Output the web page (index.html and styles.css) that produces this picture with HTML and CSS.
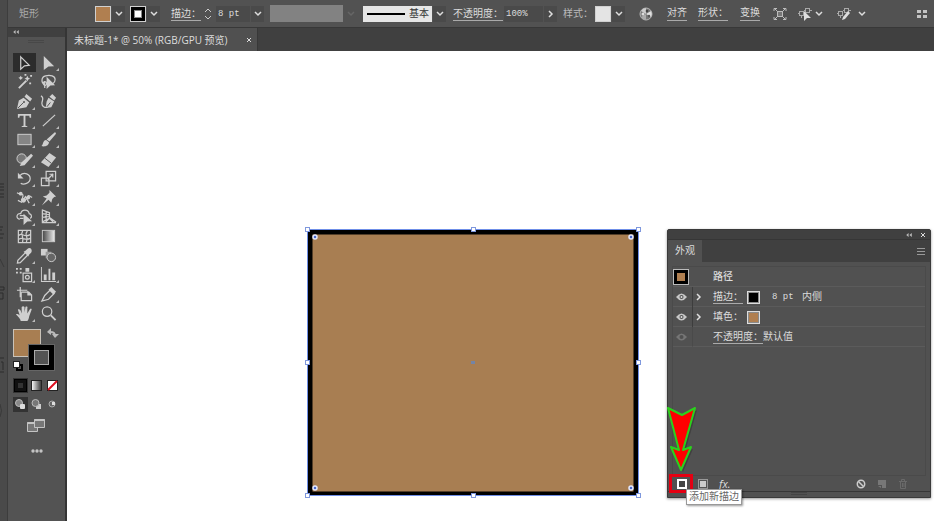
FILE: index.html
```html
<!DOCTYPE html>
<html lang="zh-CN">
<head>
    <meta charset="UTF-8">
    <meta name="viewport" content="width=device-width, initial-scale=1.0">
    <title>未标题-1</title>
    <link rel="stylesheet" href="styles.css">
</head>
<body>

<div class="app">

    <!-- Bordo sinistro -->
    <div class="edge">
        <svg width="7" height="521" viewBox="0 0 7 521" fill="none" stroke="#2c2c2c">
            <path d="M0 184h4M0 187h4M0 190h4M0 194h4M0 197h4M0 227h3M0 230h2M0 234h4M0 238h3M0 287h4v3H0M0 293h3v6H0M0 358h4M1 362h2v8M0 372h4"/>
            <path d="M0 259l4 8M0 404q3 7 0 13" stroke="#3a3a3a"/>
        </svg>
    </div>

    <div class="main">

        <!-- Barra opzioni -->
        <div class="option-bar">
            <span class="object-name">矩形</span>
            <button class="combo" aria-label="填色"><span class="swatch brown"></span><span class="arrow"><svg class="chevron" viewBox="0 0 8 6"><path d="M1 1l3 3 3-3"/></svg></span></button>
            <button class="combo" aria-label="描边颜色"><span class="swatch black"></span><span class="arrow"><svg class="chevron" viewBox="0 0 8 6"><path d="M1 1l3 3 3-3"/></svg></span></button>
            <label class="link-label" for="weight">描边：</label>
            <div class="field">
                <button class="stepper" aria-label="调整粗细"><svg width="10" height="14" viewBox="0 0 10 14"><path d="M2 5l3-3 3 3M2 9l3 3 3-3"/></svg></button>
                <input type="text" id="weight" class="weight" value="8 pt">
                <button class="arrow" aria-label="粗细列表"><svg class="chevron" viewBox="0 0 8 6"><path d="M1 1l3 3 3-3"/></svg></button>
            </div>
            <button class="combo disabled" aria-label="变量宽度配置文件" disabled><span class="profile"></span><span class="arrow"><svg class="chevron" viewBox="0 0 8 6"><path d="M1 1l3 3 3-3"/></svg></span></button>
            <div class="field">
                <div class="brush">
                    <span class="brush-line"></span>
                    <select aria-label="画笔定义"><option>基本</option></select>
                </div>
                <span class="arrow"><svg class="chevron" viewBox="0 0 8 6"><path d="M1 1l3 3 3-3"/></svg></span>
            </div>
            <label class="link-label" for="opacity">不透明度：</label>
            <div class="field">
                <input type="text" id="opacity" class="opacity" value="100%">
                <button class="arrow" aria-label="不透明度滑块"><svg class="chevron right" viewBox="0 0 8 6"><path d="M1 1l3 3 3-3"/></svg></button>
            </div>
            <span class="plain-label">样式：</span>
            <button class="combo" aria-label="图形样式"><span class="swatch light"></span><span class="arrow"><svg class="chevron" viewBox="0 0 8 6"><path d="M1 1l3 3 3-3"/></svg></span></button>
            <button class="icon-button" aria-label="重新着色图稿">
                <svg width="14" height="14" viewBox="0 0 14 14">
                    <circle cx="7" cy="7" r="6" fill="#777" stroke="#b5b5b5"/>
                    <path d="M7 7L2 4a6 6 0 0 1 5-3z" fill="#ccc"/><path d="M7 7l5-3a6 6 0 0 1 0 6z" fill="#e0e0e0"/><path d="M7 7v6a6 6 0 0 1-5-3z" fill="#aaa"/>
                    <circle cx="8" cy="4" r="1.3" fill="#444"/><circle cx="10" cy="9" r="1.2" fill="#555"/><circle cx="4" cy="7" r="1.5" fill="#ddd"/>
                </svg>
            </button>
            <button class="link-label">对齐</button>
            <button class="link-label">形状：</button>
            <button class="link-label">变换</button>
            <button class="icon-button" aria-label="隔离选中的对象">
                <svg width="14" height="14" viewBox="0 0 14 14" fill="none" stroke="#bdbdbd"><rect x="4.5" y="4.5" width="5" height="5" fill="#777"/><path d="M1 4V1.500h3M1 1l3 3M13 4V1.500h-3M13 1l-3 3M1 10v2.500h3M1 13l3-3M13 10v2.500h-3M13 13l-3-3"/></svg>
            </button>
            <button class="icon-button" aria-label="选择类似的对象">
                <svg width="14" height="14" viewBox="0 0 14 14" fill="none" stroke="#a9a9a9"><rect x="1.5" y="4.5" width="4" height="4"/><rect x="7.5" y="1.5" width="4" height="4"/><path d="M0 6.500h1M6 3.500h1M12 3.500h2M3.500 9v2"/><path d="M6 4l7 7H9l-3 3z" fill="#ddd" stroke="none"/></svg>
                <svg class="chevron" viewBox="0 0 8 6"><path d="M1 1l3 3 3-3"/></svg>
            </button>
            <button class="icon-button wide" aria-label="编辑类似的形状">
                <svg width="14" height="14" viewBox="0 0 14 14" fill="none" stroke="#a9a9a9"><rect x="1.5" y="4.5" width="4" height="4"/><rect x="7.5" y="1.5" width="4" height="4"/><path d="M0 6.500h1M6 3.500h1M12 3.500h2M3.500 9v2"/><path d="M11 4l2 2-5 6-3 1 1-3z" fill="#ddd" stroke="none"/></svg>
                <svg class="chevron" viewBox="0 0 8 6"><path d="M1 1l3 3 3-3"/></svg>
            </button>
            <button class="icon-button last" aria-label="面板菜单">
                <svg width="10" height="10" viewBox="0 0 10 10" fill="#c4c4c4"><path d="M0 1h4v3H0zM6 1h4v3H6zM0 6h4v3H0zM6 6h4v3H6z"/></svg>
            </button>
        </div>

        <div class="workspace">

            <!-- Strumenti -->
            <aside class="tools">
                <div class="tools-head"><svg width="6" height="4" viewBox="0 0 7 5" fill="#bbb"><path d="M3 0v5L0 2.500zM7 0v5L4 2.500z"/></svg></div>
                <div class="grip"></div>
                <div class="tool-grid">
                    <button class="tool active" aria-label="选择"><svg viewBox="0 0 18 18"><path class="line" d="M5 3l9 9-5 .5-4 3.500z"/></svg></button>
                    <button class="tool more" aria-label="直接选择"><svg viewBox="0 0 18 18"><path d="M4 2l11 11-6 .3L4 17z"/></svg></button>
                    <button class="tool" aria-label="魔棒"><svg viewBox="0 0 18 18"><path class="thick" d="M3 16l8-8"/><path d="M12 3l1 2 2 1-2 1-1 2-1-2-2-1 2-1zM5 3l1 1.500L7.500 5 6 6 5 7.500 4 6 2.500 5 4 4.500zM14 10h2v2h-2zM9 1h2v2H9zM15 2h2v2h-2z"/></svg></button>
                    <button class="tool" aria-label="套索"><svg viewBox="0 0 18 18"><path class="line" d="M5 12C1 11 1 4 6 3s10 0 10 4-4 5-6 5M5 9c-3 1-1 5 1 4s1-4-1-4v7"/><path d="M7 4l9 9-5 .3L7 17z"/></svg></button>
                    <button class="tool more" aria-label="钢笔"><svg viewBox="0 0 18 18"><path d="M11 1l6 5-2 3-6-5zM8 5l6 5-3 5-10 2 2-9z"/><path class="cut" d="M2 16l6-6"/><circle cx="8.5" cy="9.5" r="1" fill="#535353"/></svg></button>
                    <button class="tool" aria-label="曲率"><svg viewBox="0 0 18 18"><path d="M13 1l4 4-2 3-5-4zM9 5l6 4-3 6-6 1 1-7z"/><path class="cut" d="M7 15l4-5"/><path class="line" d="M1 3c4 2 1 5 1 8s3 5 6 4"/></svg></button>
                    <button class="tool more" aria-label="文字"><svg viewBox="0 0 18 18"><path d="M2 2h14v4h-1.500L14 4h-4v10.500l2 .5v1H6v-1l2-.5V4H4l-.5 2H2z"/></svg></button>
                    <button class="tool more" aria-label="直线段"><svg viewBox="0 0 18 18"><path class="line" d="M3 15L16 3"/></svg></button>
                    <button class="tool more" aria-label="矩形"><svg viewBox="0 0 18 18"><rect x="2" y="3.5" width="14" height="11" fill="#858585" stroke="#d0d0d0"/></svg></button>
                    <button class="tool more" aria-label="画笔"><svg viewBox="0 0 18 18"><path d="M16 1l1 2-7 8-3-2zM6.500 9.500l3 2.500c0 4-5 5-8 4 2-1 1-6 5-6.500z"/></svg></button>
                    <button class="tool more" aria-label="Shaper"><svg viewBox="0 0 18 18"><circle cx="6" cy="8" r="5" fill="#777" stroke="#d0d0d0"/><path d="M16 3l2 2-9 10-5 1 2-4z"/></svg></button>
                    <button class="tool more" aria-label="橡皮擦"><svg viewBox="0 0 18 18"><path d="M10 2l7 5-8 10-8-5z"/><path class="cut" d="M5 7.500l7 5.500"/></svg></button>
                    <button class="tool more" aria-label="旋转"><svg viewBox="0 0 18 18"><path class="line" d="M4 6c5-5 11-1 11 3 0 5-7 7-10 5" /><path d="M2 3v6h6z"/></svg></button>
                    <button class="tool more" aria-label="比例缩放"><svg viewBox="0 0 18 18"><path class="line" d="M6.500 1.500h10v10h-10zM1.500 8.500h8v8h-8zM8 10l6-6M10 4.500h3.500V8"/></svg></button>
                    <button class="tool more" aria-label="宽度"><svg viewBox="0 0 18 18"><path class="line" d="M1 4l4 2c4-2 2 4 1 5s3 3 5-1 2-4 6-1M2 12l4 2 4-6 4 7"/><circle cx="5" cy="5" r="2"/><circle cx="8" cy="12" r="2.5"/><circle cx="13" cy="9" r="2"/></svg></button>
                    <button class="tool more" aria-label="操控变形"><svg viewBox="0 0 18 18"><path d="M10 1l7 7-2 .5-2 2-1 4-3-3-7 6 5-7.500-4-2 4-1 3-3z"/></svg></button>
                    <button class="tool more" aria-label="形状生成器"><svg viewBox="0 0 18 18"><path class="line" d="M4 12c-5-1-3-7 1-6 1-5 8-5 9 0 3 1 3 4 1 5M4 8h5M4 11h4"/><path d="M8 6l9 8-5 .3L8 18z"/></svg></button>
                    <button class="tool more" aria-label="透视网格"><svg viewBox="0 0 18 18"><path class="line" d="M2.500 1.500v14H17M2 2l8 3v6l-8 4M2 6l8 1M2 10l8-1M6.500 3.500v9M10 10l7 5M6 15l4-4 4 4"/></svg></button>
                    <button class="tool" aria-label="网格"><svg viewBox="0 0 18 18"><path class="line" d="M2.500 2.500h13v13h-13zM3 8c4-4 5 3 12-1M3 12c4-3 7 2 12-1M7 3c-3 5 2 6 0 12M12 3c-4 5 2 6-1 12"/></svg></button>
                    <button class="tool" aria-label="渐变"><svg viewBox="0 0 18 18"><defs><linearGradient id="grad"><stop stop-color="#444"/><stop offset="1" stop-color="#eee"/></linearGradient></defs><rect x="2.5" y="2.500" width="13" height="12" fill="url(#grad)" stroke="#c8c8c8"/></svg></button>
                    <button class="tool more" aria-label="吸管"><svg viewBox="0 0 18 18"><path class="line" d="M10 6l-8 8-.5 3 3-.5 8-8"/><path d="M8 5l2-1 2-2c3-3 6 1 4 4l-2 2-1 2z"/></svg></button>
                    <button class="tool" aria-label="混合"><svg viewBox="0 0 18 18"><rect x="1" y="2" width="7" height="7"/><rect x="6" y="5" width="6" height="7" fill="#999"/><circle cx="12" cy="11" r="4.500" fill="#666" stroke="#ccc"/></svg></button>
                    <button class="tool more" aria-label="符号喷枪"><svg viewBox="0 0 18 18"><path class="line" d="M7.500 7.500h9v9h-9z"/><path d="M10 2h4v4h-4zM0 2h2v2H0zM4 2h2v2H4zM0 6h2v2H0zM4 6h2v2H4z"/><circle class="line" cx="12" cy="12" r="2"/></svg></button>
                    <button class="tool more" aria-label="柱形图"><svg viewBox="0 0 18 18"><path d="M1 1h1v15h15v1H1zM4 9h3v6H4zM9 3h2v12H9zM13 7h3v8h-3z"/></svg></button>
                    <button class="tool" aria-label="画板"><svg viewBox="0 0 18 18"><path class="line" d="M4.500 1v11M1 4.500h11M5.500 6.500v9h11v-6l-3-3h-8"/><path d="M12 5l5 5h-5z"/></svg></button>
                    <button class="tool more" aria-label="切片"><svg viewBox="0 0 18 18"><path class="line" d="M2 16l3-6 6-6 4 4-6 6z"/><path d="M12 1l5 5-3 3-5-5z"/></svg></button>
                    <button class="tool more" aria-label="抓手"><svg viewBox="0 0 18 18"><path d="M5 17c0-2-3-5-5-7 1-1 3 0 4 1L2 5c1-1 2 0 3 1l1 3V2c1-1 2-1 3 0v6l1-6c1-1 3 0 2 1v6l3-5c1 0 2 0 1.500 1L14 12c-.5 3-1 4-2 5z"/></svg></button>
                    <button class="tool" aria-label="缩放"><svg viewBox="0 0 18 18"><circle class="line" cx="7.5" cy="7" r="5"/><path class="thick" d="M11.500 11l5 5"/></svg></button>
                </div>

                <svg class="fill-stroke" width="48" height="44" viewBox="0 0 48 44">
                    <rect x="1.5" y="1.5" width="27" height="27" fill="#a87e52" stroke="#c9c2b8"/>
                    <rect x="16.5" y="16.5" width="26" height="26" fill="#000" stroke="#666"/>
                    <rect x="22.5" y="22.5" width="14" height="14" fill="#535353" stroke="#aaa"/>
                    <path d="M38 4c4 0 5 1 5 5" fill="none" stroke="#bbb" stroke-width="2"/>
                    <path d="M39 0v7l-4-3zM40 6h7l-4 4z" fill="#bbb"/>
                    <rect x="5" y="37" width="5" height="5" fill="none" stroke="#000" stroke-width="2"/>
                    <rect x="1.500" y="33.500" width="6" height="6" fill="#fff" stroke="#222"/>
                </svg>

                <div class="mode-row">
                    <button class="mode dark" aria-label="颜色"><svg width="13" height="13" viewBox="0 0 13 13"><rect x=".5" y=".5" width="12" height="12" fill="#111" stroke="#000"/><rect x="4" y="4" width="5" height="5" fill="#333"/></svg></button>
                    <button class="mode" aria-label="渐变填充"><svg width="13" height="13" viewBox="0 0 13 13"><defs><linearGradient id="grad2"><stop stop-color="#fff"/><stop offset="1" stop-color="#333"/></linearGradient></defs><rect x="1.5" y="1.5" width="10" height="10" fill="url(#grad2)" stroke="#222"/></svg></button>
                    <button class="mode" aria-label="无"><svg width="13" height="13" viewBox="0 0 13 13"><rect x="1.5" y="1.5" width="10" height="10" fill="#fff" stroke="#222"/><path d="M2 11l9-9" stroke="#e01020" stroke-width="2"/></svg></button>
                </div>
                <div class="mode-row">
                    <button class="mode dark" aria-label="正常绘图"><svg width="13" height="13" viewBox="0 0 13 13"><circle cx="5" cy="5" r="3.5" fill="#888" stroke="#bbb"/><rect x="6" y="6" width="5" height="5" rx="1" fill="#ddd"/></svg></button>
                    <button class="mode" aria-label="背面绘图"><svg width="13" height="13" viewBox="0 0 13 13"><rect x="6" y="6" width="5" height="5" fill="#ccc"/><circle cx="5.5" cy="5" r="3.5" fill="#777" stroke="#bbb"/></svg></button>
                    <button class="mode" aria-label="内部绘图"><svg width="13" height="13" viewBox="0 0 13 13"><circle cx="6" cy="6" r="3" fill="#666" stroke="#aaa"/><path d="M6 7V4h3v3z" fill="#ddd"/></svg></button>
                </div>
                <button class="screen-mode" aria-label="更改屏幕模式"><svg width="18" height="15" viewBox="0 0 18 15" fill="#777" stroke="#c4c4c4"><path d="M.5 4.500h10v9H.5z"/><path d="M.5 5h10" stroke-width="2"/><path d="M7.500 1.500h10v8h-10z"/><path d="M7.500 2h10" stroke-width="2"/></svg></button>
                <button class="more-tools" aria-label="编辑工具栏"><svg width="12" height="4" viewBox="0 0 12 4" fill="#c4c4c4"><circle cx="2" cy="2" r="1.7"/><circle cx="6" cy="2" r="1.7"/><circle cx="10" cy="2" r="1.7"/></svg></button>
            </aside>

            <!-- Documento -->
            <main class="document">
                <div class="tab-bar">
                    <div class="tab">
                        <span>未标题-1* @ 50% (RGB/GPU 预览)</span>
                        <button class="close" aria-label="关闭"><svg width="6" height="6" viewBox="0 0 6 6"><path d="M1 1l4 4M5 1L1 5"/></svg></button>
                    </div>
                </div>

                <div class="canvas">
                    <svg class="artwork" width="340" height="276" viewBox="0 0 340 276">
                        <rect x="5" y="6" width="330" height="266" fill="#000"/>
                        <rect x="9.5" y="10.5" width="321" height="257" fill="#a87e52"/>
                        <rect x="4.5" y="5.5" width="331" height="266" fill="none" stroke="#6f8fe8"/>
                        <g fill="#fff" stroke="#7f98dd">
                            <rect x="2.5" y="3.5" width="4" height="4"/><rect x="168.5" y="3.5" width="4" height="4"/><rect x="333.5" y="3.5" width="4" height="4"/>
                            <rect x="2.5" y="136.5" width="4" height="4"/><rect x="333.5" y="136.5" width="4" height="4"/>
                            <rect x="2.5" y="269.5" width="4" height="4"/><rect x="168.5" y="269.5" width="4" height="4"/><rect x="333.5" y="269.5" width="4" height="4"/>
                        </g>
                        <g fill="#4a68cc" stroke="#e4e9ff" stroke-width="1.5">
                            <circle cx="12" cy="13" r="2"/><circle cx="328" cy="13" r="2"/><circle cx="12" cy="264" r="2"/><circle cx="328" cy="264" r="2"/>
                        </g>
                        <rect x="168" y="137" width="4" height="3" fill="#7484a4"/>
                    </svg>

                    <!-- Pannello aspetto -->
                    <section class="panel">
                        <div class="panel-head">
                            <svg width="6" height="4" viewBox="0 0 7 5" fill="#bbb"><path d="M3 0v5L0 2.500zM7 0v5L4 2.500z"/></svg>
                            <button class="close" aria-label="关闭面板"><svg width="6" height="6" viewBox="0 0 6 6"><path d="M1 1l4 4M5 1L1 5"/></svg></button>
                        </div>
                        <div class="panel-tabs">
                            <button class="panel-tab">外观</button>
                            <button class="menu" aria-label="面板菜单"><svg width="8" height="7" viewBox="0 0 8 7" stroke="#999"><path d="M0 .5h8M0 3.500h8M0 6.500h8"/></svg></button>
                        </div>
                        <div class="list">
                            <div class="row">
                                <span class="thumb"></span>
                                <span></span>
                                <strong>路径</strong>
                            </div>
                            <div class="row ruled">
                                <button class="eye" aria-label="切换描边可视性"><svg width="11" height="8" viewBox="0 0 11 8"><path d="M0 4q5.500-7 11 0-5.500 7-11 0z"/><circle cx="5.5" cy="4" r="2"/><circle class="pupil" cx="5.5" cy="4" r="1"/></svg></button>
                                <button class="expand" aria-label="展开描边"><svg class="chevron right" viewBox="0 0 8 6"><path d="M1 1l3 3 3-3"/></svg></button>
                                <div class="attr">
                                    <button class="link-label">描边：</button>
                                    <span class="chip black"></span>
                                    <span class="mono">8 pt</span>
                                    <span>内侧</span>
                                </div>
                            </div>
                            <div class="row ruled">
                                <button class="eye" aria-label="切换填色可视性"><svg width="11" height="8" viewBox="0 0 11 8"><path d="M0 4q5.500-7 11 0-5.500 7-11 0z"/><circle cx="5.5" cy="4" r="2"/><circle class="pupil" cx="5.5" cy="4" r="1"/></svg></button>
                                <button class="expand" aria-label="展开填色"><svg class="chevron right" viewBox="0 0 8 6"><path d="M1 1l3 3 3-3"/></svg></button>
                                <div class="attr">
                                    <span class="attr-name">填色：</span>
                                    <span class="chip brown"></span>
                                </div>
                            </div>
                            <div class="row ruled">
                                <button class="eye off" aria-label="不透明度可视性"><svg width="11" height="8" viewBox="0 0 11 8"><path d="M0 4q5.500-7 11 0-5.500 7-11 0z"/><circle cx="5.5" cy="4" r="2"/></svg></button>
                                <span></span>
                                <div class="opacity-attr"><button class="link-label">不透明度：</button><span>默认值</span></div>
                            </div>
                        </div>
                        <div class="panel-foot">
                            <button aria-label="添加新描边"><svg width="10" height="10" viewBox="0 0 10 10"><rect x="1" y="1" width="8" height="8" fill="#444" stroke="#fff" stroke-width="2"/></svg></button>
                            <button aria-label="添加新填色"><svg width="10" height="10" viewBox="0 0 10 10"><rect x=".5" y=".5" width="9" height="9" fill="#555" stroke="#999"/><rect x="2" y="2" width="6" height="6" fill="#ccc"/></svg></button>
                            <button class="fx">fx.</button>
                            <button class="push" aria-label="清除外观"><svg width="10" height="10" viewBox="0 0 10 10" fill="none" stroke="#ccc" stroke-width="1.5"><circle cx="5" cy="5" r="3.7"/><path d="M2.500 2.500l5 5"/></svg></button>
                            <button aria-label="复制所选项目" disabled><svg width="10" height="10" viewBox="0 0 10 10" fill="#777"><path d="M1 1h8v8H5V6H1z"/><path d="M1 7h3v2z"/></svg></button>
                            <button aria-label="删除所选项目" disabled><svg width="10" height="10" viewBox="0 0 10 10" fill="none" stroke="#6a6a6a"><path d="M1 2.500h8M3.500 2V.5h3V2M2.500 3v6.500h5V3M4.500 4v4M6 4v4"/></svg></button>
                        </div>
                        <div class="panel-grip"></div>

                        <!-- Freccia e suggerimento -->
                        <svg class="pointer" width="32" height="90" viewBox="0 0 32 90">
                            <path d="M2 4l13 7 13-7-12 42 8-3-10 23-10-23 8 3z" fill="#222" opacity=".35" transform="translate(2 2)"/>
                            <path d="M1 4l14 7 13-7-12 42 8-3-10 23-10-23 8 3z" fill="#f00" stroke="#2bd11c" stroke-width="2" stroke-linejoin="round"/>
                            <rect x="3.5" y="71.5" width="21" height="16" fill="none" stroke="#e50012" stroke-width="3"/>
                        </svg>
                        <div class="tooltip" role="tooltip">添加新描边</div>
                    </section>
                </div>
            </main>
        </div>
    </div>
</div>

</body>
</html>
```

FILE: styles.css
```css
* {
    box-sizing: border-box;
}

body {
    margin: 0;
    font-family: "Liberation Sans", "Noto Sans CJK SC", sans-serif;
    font-size: 10px;
    line-height: 14px;
    color: #dcdcdc;
    background-color: #fff;
}

button, input, select {
    font: inherit;
    color: inherit;
    margin: 0;
    padding: 0;
    border: none;
    background: none;
}

button {
    display: flex;
    align-items: center;
}

svg {
    display: block;
    flex: none;
}

.app {
    display: flex;
    height: 100vh;
    overflow: hidden;
}

.edge {
    flex: none;
    width: 8px;
    background-color: #4a4a4a;
    border-right: 1px solid #3d3d3d;
    overflow: hidden;
}

.main {
    flex: 1;
    min-width: 0;
    display: flex;
    flex-direction: column;
}

/* Barra opzioni */
.option-bar {
    display: grid;
    grid-template-columns: 76px 35px 41px 32px 67px 93px 90px 51px 59px 32px 44px 28px 31px 42px 33px 25px 39px 30px 1fr;
    align-items: center;
    flex: none;
    height: 28px;
    padding: 0 7px 0 11px;
    background-color: #525252;
    border-bottom: 1px solid #383838;
    white-space: nowrap;
}

.object-name {
    color: #aaa;
}

.combo, .field {
    display: flex;
    align-items: center;
    gap: 1px;
}

.link-label {
    justify-self: start;
    height: 14px;
    width: max-content;
    line-height: 14px;
    border-bottom: 1px solid #aaa;
}

.plain-label {
    color: #bbb;
}

.swatch {
    width: 16px;
    height: 16px;
    border: 1px solid #d0d0d0;
}

.brown {
    background-color: #b07f50;
}

.black {
    background-color: #000;
}

.swatch.black {
    display: grid;
    place-items: center;
}

.swatch.black::before {
    content: "";
    width: 6px;
    height: 6px;
    background-color: #fff;
    border: 1px solid #888;
}

.light {
    background-color: #e4e4e4;
}

.arrow {
    display: grid;
    place-items: center;
    width: 13px;
    height: 16px;
    background-color: #4a4a4a;
}

.chevron {
    width: 8px;
    height: 6px;
    fill: none;
    stroke: #ddd;
    stroke-width: 1.5px;
}

.chevron.right {
    transform: rotate(-90deg);
}

.disabled .chevron {
    stroke: #666;
}

.disabled .arrow {
    background: none;
}

.stepper {
    width: 12px;
    fill: none;
    stroke: #ccc;
}

.weight, .opacity {
    height: 16px;
    padding: 0 2px;
    background-color: #4a4a4a;
    font-family: "Liberation Mono", monospace;
    font-size: 9px;
}

.weight {
    width: 34px;
}

.opacity {
    width: 39px;
}

.profile {
    width: 73px;
    height: 17px;
    background-color: #828282;
}

.brush {
    display: flex;
    align-items: center;
    gap: 4px;
    width: 69px;
    height: 16px;
    padding-left: 4px;
    background-color: #e6e6e6;
    color: #333;
}

.brush select {
    appearance: none;
    width: 22px;
}

.brush-line {
    width: 38px;
    height: 2px;
    background-color: #000;
}

.icon-button {
    gap: 3px;
}

.icon-button.wide {
    gap: 7px;
}

.icon-button.last {
    justify-self: end;
}

/* Strumenti */
.workspace {
    flex: 1;
    min-height: 0;
    display: flex;
}

.tools {
    flex: none;
    display: flex;
    flex-direction: column;
    width: 59px;
    background-color: #535353;
    border-right: 2px solid #353535;
}

.tools-head {
    height: 9px;
    padding: 2px 5px;
    background-color: #404040;
}

.grip {
    width: 16px;
    height: 3px;
    margin: 3px auto 10px 20px;
    border-top: 1px solid #484848;
    border-bottom: 1px solid #484848;
}

.tool-grid {
    display: grid;
    grid-template-columns: 23px 23px;
    grid-template-rows: repeat(14, 1fr);
    column-gap: 1px;
    height: 270px;
    padding-left: 5px;
}

.tool {
    position: relative;
    justify-content: center;
}

.tool svg {
    width: 17px;
    height: 17px;
    fill: #cfcfcf;
}

.tool .line {
    fill: none;
    stroke: #cfcfcf;
    stroke-width: 1.3px;
}

.tool .thick {
    fill: none;
    stroke: #cfcfcf;
    stroke-width: 2px;
}

.tool .cut {
    fill: none;
    stroke: #535353;
}

.tool.active {
    background-color: #2c2c2c;
}

.tool.more::after {
    content: "";
    position: absolute;
    right: 1px;
    bottom: 1px;
    border-left: 3px solid transparent;
    border-bottom: 3px solid #bbb;
}

.fill-stroke {
    margin: 5px 4px 6px;
}

.mode-row {
    display: flex;
    gap: 1px;
    padding-left: 5px;
    margin-bottom: 4px;
}

.mode {
    justify-content: center;
    width: 15px;
    height: 15px;
}

.mode.dark {
    background-color: #333;
}

.screen-mode {
    margin: 2px 0 0 19px;
}

.more-tools {
    margin: 16px 0 0 23px;
}

/* Documento */
.document {
    flex: 1;
    min-width: 0;
    display: flex;
    flex-direction: column;
}

.tab-bar {
    display: flex;
    flex: none;
    height: 23px;
    background-color: #404040;
}

.tab {
    display: flex;
    align-items: center;
    gap: 18px;
    padding: 0 5px 0 7px;
    background-color: #505050;
    border-right: 1px solid #383838;
    font-family: "Open Sans", "Noto Sans CJK SC", sans-serif;
    white-space: nowrap;
}

.close {
    fill: none;
    stroke: #ddd;
}

.canvas {
    position: relative;
    flex: 1;
    background-color: #fff;
}

.artwork {
    position: absolute;
    left: 236px;
    top: 173px;
}

/* Pannello aspetto */
.panel {
    position: absolute;
    left: 600px;
    top: 178px;
    width: 264px;
    background-color: #515151;
    border: 1px solid #3a3a3a;
    border-radius: 2px 2px 0 0;
    box-shadow: 0 1px 3px rgba(0, 0, 0, 0.4);
}

.panel-head {
    display: flex;
    align-items: center;
    justify-content: flex-end;
    gap: 8px;
    height: 10px;
    padding-right: 4px;
    background-color: #404040;
    border-bottom: 1px solid #363636;
}

.panel-tabs {
    display: flex;
    align-items: center;
    justify-content: space-between;
    height: 22px;
    padding-right: 5px;
    background-color: #404040;
}

.panel-tab {
    height: 22px;
    padding: 0 7px;
    background-color: #515151;
}

.list {
    height: 210px;
    margin: 4px 4px 0;
    border: 1px solid #4a4a4a;
}

.row {
    display: grid;
    grid-template-columns: 20px 20px 1fr;
    align-items: center;
    height: 20px;
    border-bottom: 1px solid #5b5b5b;
}

.ruled > :first-child {
    border-right: 1px solid #3d3d3d;
}

.row strong {
    font-weight: 500;
}

.thumb {
    width: 14px;
    height: 14px;
    margin-left: 1px;
    background-color: #b07f50;
    border: 3px solid #000;
    outline: 1px solid #bbb;
}

.eye {
    height: 20px;
    padding-left: 3px;
    fill: #c8c8c8;
}

.eye circle {
    fill: #505050;
}

.eye .pupil {
    fill: #ddd;
}

.eye.off {
    opacity: 0.3;
}

.expand {
    padding-left: 2px;
}

.attr {
    display: grid;
    grid-template-columns: 34px 25px 30px 1fr;
    align-items: center;
}

.opacity-attr {
    display: flex;
}

.chip {
    width: 13px;
    height: 13px;
    border: 1px solid #ddd;
    box-shadow: inset 0 0 0 1px #8a8a8a;
}

.mono {
    font-family: "Liberation Mono", monospace;
    font-size: 9px;
}

.panel-foot {
    display: flex;
    align-items: center;
    gap: 11px;
    height: 16px;
    padding: 0 22px 0 9px;
    border-bottom: 1px solid #363636;
}

.fx {
    font-family: "Open Sans", sans-serif;
    font-size: 11px;
    font-style: italic;
}

.push {
    margin-left: auto;
}

.panel-grip {
    width: 16px;
    height: 5px;
    margin: 0 auto;
    border-top: 3px double #444;
}

.pointer {
    position: absolute;
    left: -1px;
    top: 174px;
}

.tooltip {
    position: absolute;
    left: 18px;
    top: 259px;
    padding: 0 2px;
    background-color: #fff;
    border: 1px solid #999;
    box-shadow: 1px 1px 2px rgba(0, 0, 0, 0.4);
    color: #666;
    white-space: nowrap;
}
```
